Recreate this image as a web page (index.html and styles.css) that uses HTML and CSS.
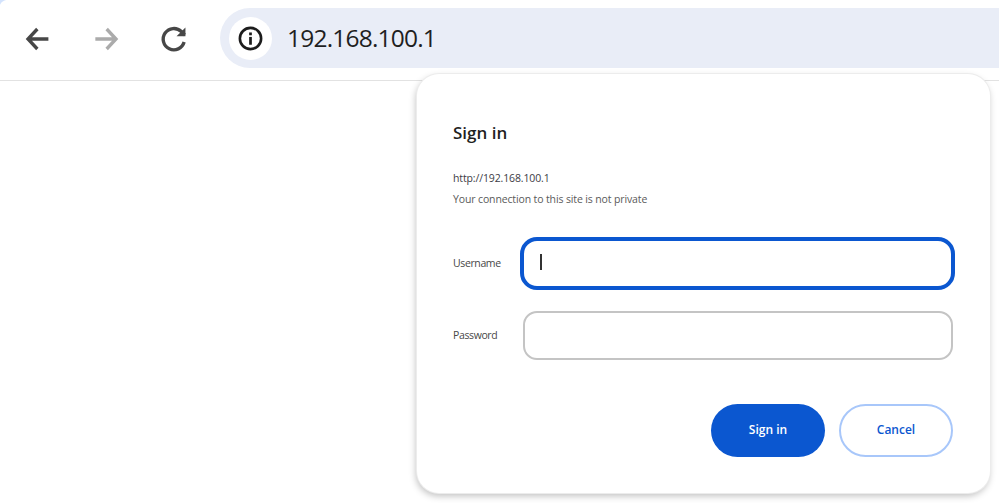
FILE: index.html
```html
<!DOCTYPE html>
<html lang="en">
<head>
<meta charset="utf-8">
<title>Sign in</title>
<link rel="stylesheet" href="styles.css">
</head>
<body>
<header class="toolbar">
  <span class="tab-corner"></span>
  <nav class="nav">
    <svg class="nav-icon" viewBox="0 0 24 24"><path class="stroke-dark" d="M19.800 12H5M11.500 4.500 4.500 12l7 7.500"/></svg>
    <svg class="nav-icon" viewBox="0 0 24 24"><path class="stroke-light" d="M4 12H19M12.500 4.500 19.500 12l-7 7.500"/></svg>
    <svg class="nav-icon" viewBox="0 0 24 24"><path class="stroke-dark" d="M19.600 14.300A8 8 0 1 1 17.500 6.400L20 9"/><path class="fill-dark" d="M20.600 3.300V10H13.900Z"/></svg>
  </nav>
  <div class="omnibox">
    <span class="site-chip">
      <svg class="info-icon" viewBox="0 0 24 24"><circle cx="12" cy="12" r="10.200" fill="none" stroke="#1c1c1c" stroke-width="2.500"/><rect x="10.700" y="10.500" width="2.600" height="7.500" fill="#1c1c1c"/><rect x="10.700" y="6.200" width="2.600" height="2.700" fill="#1c1c1c"/></svg>
    </span>
    <span class="url">192.168.100.1</span>
  </div>
</header>
<section class="dialog">
  <h1 class="title">Sign in</h1>
  <p class="origin">http://192.168.100.1</p>
  <p class="notice">Your connection to this site is not private</p>
  <div class="fields">
    <div class="row">
      <label class="label">Username</label>
      <div class="input input-focus"><span class="caret"></span></div>
    </div>
    <div class="row">
      <label class="label">Password</label>
      <div class="input"></div>
    </div>
  </div>
  <div class="actions">
    <button class="btn btn-primary">Sign in</button>
    <button class="btn btn-secondary">Cancel</button>
  </div>
</section>
</body>
</html>
```
FILE: styles.css
```css
* { box-sizing: border-box; }
html, body { margin: 0; padding: 0; }
body {
  width: 999px;
  height: 503px;
  background: #fff;
  overflow: hidden;
  font-family: "Open Sans", "Noto Sans", sans-serif;
  position: relative;
}
.toolbar {
  height: 81px;
  border-bottom: 1px solid #e2e2e2;
  display: flex;
  padding: 8px 0 0 22px;
  position: relative;
}
.tab-corner {
  position: absolute;
  left: 0;
  top: 0;
  width: 8px;
  height: 5px;
  background: #d3e3fd;
  clip-path: path("M0 0H8C4 0 1 2 0 5Z");
}
.nav {
  display: flex;
  gap: 36px;
  height: 60px;
  align-items: center;
  margin-right: 30px;
}
.nav-icon { width: 32px; height: 32px; margin-top: 2px; }
.stroke-dark, .stroke-light { fill: none; stroke-width: 2.500; }
.stroke-dark { stroke: #474747; }
.stroke-light { stroke: #ababab; }
.fill-dark { fill: #474747; }
.omnibox {
  flex: 1;
  height: 60px;
  background: #e9edf7;
  border-radius: 30px 0 0 30px;
  display: flex;
  align-items: center;
  padding-left: 9px;
}
.site-chip {
  width: 43px;
  height: 43px;
  border-radius: 50%;
  background: #fff;
  display: flex;
  align-items: center;
  justify-content: center;
  margin-right: 15px;
  margin-top: 1px;
}
.info-icon { width: 25px; height: 25px; }
.url {
  font-size: 24.500px;
  letter-spacing: -0.800px;
  color: #1f1f1f;
  line-height: 60px;
}
.dialog {
  position: absolute;
  left: 417px;
  top: 74px;
  width: 573px;
  height: 419px;
  background: #fff;
  border-radius: 22px;
  box-shadow: 0 0 0 1px #ececec, -1px 3px 7px rgba(0,0,0,.25);
  padding: 47px 36px 0;
}
.title {
  margin: 0;
  font-size: 17px;
  font-weight: 600;
  line-height: 24px;
  color: #1f1f1f;
}
.origin, .notice {
  margin: 0;
  font-size: 10.500px;
  letter-spacing: -0.130px;
  line-height: 16px;
}
.origin { color: #3c3c44; margin-top: 25px; }
.notice { color: #5a5a5a; margin-top: 5px; }
.fields {
  display: flex;
  flex-direction: column;
  gap: 22px;
  margin-top: 31px;
}
.row { display: flex; align-items: center; height: 50px; }
.label {
  flex: none;
  width: 70px;
  font-size: 10.500px;
  letter-spacing: -0.380px;
  color: #474747;
}
.input {
  flex: none;
  width: 430px;
  height: 49px;
  border: 2px solid #c4c4c4;
  border-radius: 14px;
  background: #fff;
  display: flex;
  align-items: center;
  padding-left: 15px;
}
.input-focus {
  border: 4px solid #0b57d0;
  width: 435px;
  height: 53px;
  border-radius: 17px;
  margin-left: -3px;
  padding-left: 16px;
}
.caret { width: 2px; height: 16px; background: #333; margin-top: -2px; }
.actions {
  display: flex;
  justify-content: flex-end;
  gap: 14px;
  margin-top: 44px;
  padding-right: 1px;
}
.btn {
  width: 114px;
  height: 53px;
  border-radius: 27px;
  font-family: inherit;
  font-size: 12px;
  font-weight: 600;
  padding: 0 0 2px;
}
.btn-primary { background: #0b57d0; border: 0; color: #fff; }
.btn-secondary { background: #fff; border: 2px solid #a8c7fa; color: #0b57d0; }
```
